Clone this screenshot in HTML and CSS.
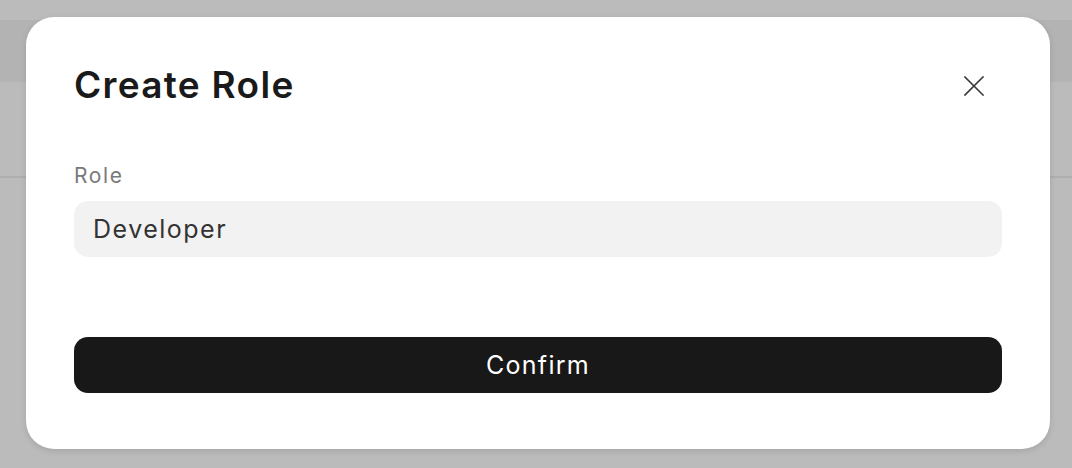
FILE: index.html
```html
<!DOCTYPE html>
<html lang="en">
<head>
<meta charset="utf-8">
<title>Create Role</title>
<link rel="stylesheet" href="styles.css">
</head>
<body>
<div class="page">
  <div class="topbar"></div>
  <div class="subbar"></div>
</div>
<div class="modal" role="dialog" aria-labelledby="modal-title">
  <div class="modal-header">
    <h1 id="modal-title" class="modal-title">Create Role</h1>
    <button class="close-btn" aria-label="Close">
      <svg width="20" height="20" viewBox="0 0 20 20" fill="none" stroke="#3a3a3a" stroke-width="1.6" stroke-linecap="square">
        <path d="M1 1 L19 19 M19 1 L1 19"/>
      </svg>
    </button>
  </div>
  <label class="field-label" for="role">Role</label>
  <div class="field-input" id="role">Developer</div>
  <button class="confirm-btn">Confirm</button>
</div>
</body>
</html>
```

FILE: styles.css
```css
* { box-sizing: border-box; }
html, body { margin: 0; padding: 0; }
body {
  background: #bbbbbb;
  font-family: Inter, "Noto Sans", "Liberation Sans", sans-serif;
  height: 468px;
  overflow: hidden;
}
.page { padding-top: 20px; }
.topbar { height: 62px; background: #b3b3b3; }
.subbar { height: 96px; border-bottom: 2px solid #afafaf; }

.modal {
  position: absolute;
  left: 26px;
  top: 17px;
  width: 1024px;
  height: 432px;
  background: #ffffff;
  border-radius: 28px;
  box-shadow: 0 2px 6px rgba(0,0,0,0.12);
  padding: 46px 48px 56px;
  display: flex;
  flex-direction: column;
}
.modal-header {
  display: flex;
  align-items: center;
  justify-content: space-between;
  height: 44px;
}
.modal-title {
  margin: 0;
  font-size: 37px;
  line-height: 44px;
  font-weight: 600;
  color: #1a1a1a;
  letter-spacing: 1.3px;
}
.close-btn {
  border: 0;
  background: none;
  padding: 0;
  width: 20px;
  height: 20px;
  margin-right: 18px;
  margin-top: 2px;
  display: flex;
}
.field-label {
  margin-top: 55px;
  font-size: 21px;
  line-height: 28px;
  color: #7a7a7a;
  letter-spacing: 1.6px;
}
.field-input {
  margin-top: 11px;
  height: 56px;
  border-radius: 14px;
  background: #f2f2f2;
  padding: 0 19px;
  display: flex;
  align-items: center;
  font-size: 25px;
  color: #333333;
  letter-spacing: 1.5px;
}
.confirm-btn {
  margin-top: 80px;
  height: 56px;
  border: 0;
  border-radius: 14px;
  background: #181818;
  color: #ffffff;
  font-family: inherit;
  font-size: 25px;
  letter-spacing: 1.3px;
}
```
